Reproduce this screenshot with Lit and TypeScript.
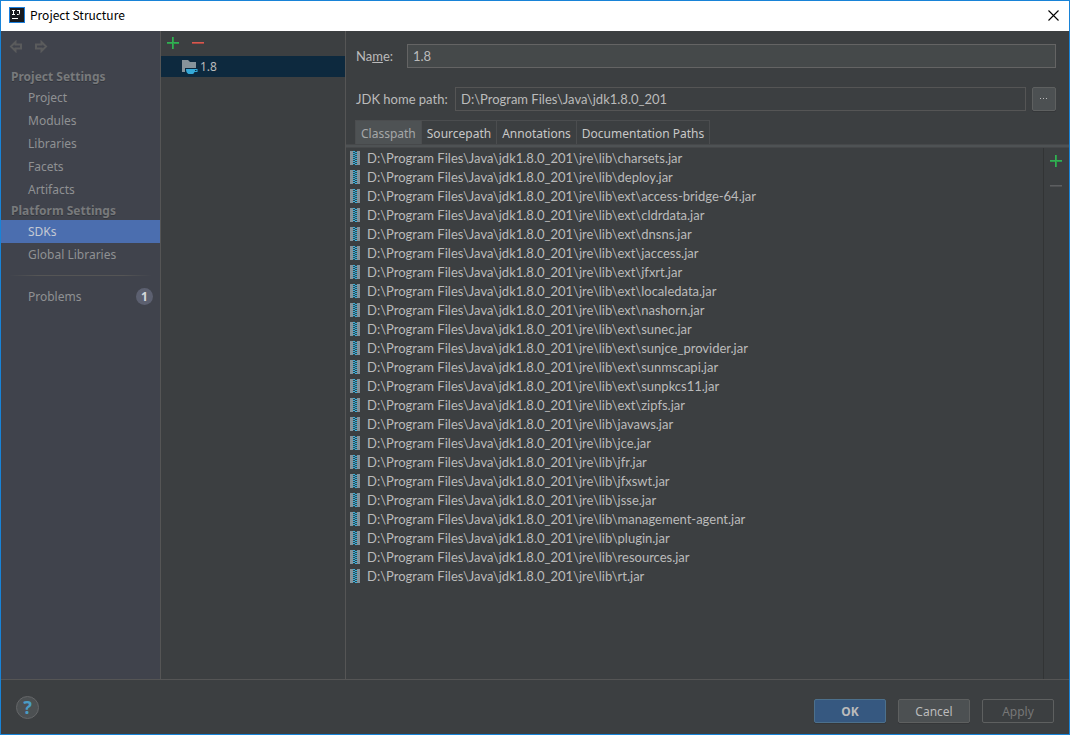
import { LitElement, html, css, svg } from "lit";
import { customElement, state } from "lit/decorators.js";

const LIB = "D:\\Program Files\\Java\\jdk1.8.0_201\\jre\\lib\\";
const JARS = [
  "charsets.jar",
  "deploy.jar",
  "ext\\access-bridge-64.jar",
  "ext\\cldrdata.jar",
  "ext\\dnsns.jar",
  "ext\\jaccess.jar",
  "ext\\jfxrt.jar",
  "ext\\localedata.jar",
  "ext\\nashorn.jar",
  "ext\\sunec.jar",
  "ext\\sunjce_provider.jar",
  "ext\\sunmscapi.jar",
  "ext\\sunpkcs11.jar",
  "ext\\zipfs.jar",
  "javaws.jar",
  "jce.jar",
  "jfr.jar",
  "jfxswt.jar",
  "jsse.jar",
  "management-agent.jar",
  "plugin.jar",
  "resources.jar",
  "rt.jar",
];
const TABS = ["Classpath", "Sourcepath", "Annotations", "Documentation Paths"];
const SECTIONS = [
  { title: "Project Settings", items: ["Project", "Modules", "Libraries", "Facets", "Artifacts"] },
  { title: "Platform Settings", items: ["SDKs", "Global Libraries"] },
];

const plusIcon = html`<svg width="12" height="12" viewBox="0 0 12 12" shape-rendering="crispEdges" aria-hidden="true">
  <path d="M5 0h2v12h-2zM0 5h12v2h-12z" fill="#299c46" />
  <path d="M5 0h1v12h-1zM0 5h12v1h-12z" fill="#35ad55" />
</svg>`;

const minusIcon = (top: string, bottom: string) => html`<svg width="12" height="12" viewBox="0 0 12 12" shape-rendering="crispEdges" aria-hidden="true">
  <path d="M0 5h12v1h-12z" fill=${top} />
  <path d="M0 6h12v1h-12z" fill=${bottom} />
</svg>`;

const arrowIcon = (d: string) => html`<svg width="13" height="13" viewBox="0 0 13 13" aria-hidden="true">
  <path d=${d} fill="none" stroke="#5a5b5c" stroke-width="2" />
</svg>`;

const jarIcon = html`<svg width="10" height="14" viewBox="0 0 10 14" shape-rendering="crispEdges" aria-hidden="true">
  <path d="M0 0h3v14h-3zM7 0h3v14h-3z" fill="#87939a" />
  <path d="M3 0h4v14h-4z" fill="#2b4450" />
  ${[0, 2, 4, 6, 8, 10, 12].map((y) => svg`<path d="M3 ${y}h2v1h-2zM5 ${y + 1}h2v1h-2z" fill="#3fb3dc" />`)}
</svg>`;

@customElement("app-root")
export class AppRoot extends LitElement {
  @state() private section = "SDKs";
  @state() private tab = "Classpath";

  static styles = css`
    :host {
      display: block;
      font: 12px/18px "Noto Sans", sans-serif;
      color: #bbbbbb;
    }
    * { box-sizing: border-box; }
    svg { display: block; flex: none; }
    button, input { font: inherit; color: inherit; margin: 0; }
    button { padding: 0; border: 0; background: none; }
    .window {
      display: flex;
      flex-direction: column;
      min-height: 100vh;
      border: 1px solid #1883d7;
      background: #3c3f41;
    }
    .titlebar {
      display: flex;
      align-items: center;
      gap: 5px;
      height: 30px;
      padding: 0 10px 2px 8px;
      background: #fff;
      color: #000;
      font-family: "Noto Sans CJK SC", sans-serif;
    }
    .title { flex: 1; margin: 0; font-size: inherit; font-weight: 400; }
    .main {
      flex: 1;
      display: grid;
      grid-template-columns: 160px 185px minmax(0, 1fr);
    }
    .sidebar { background: #40434c; border-right: 1px solid #555555; color: #8f9193; }
    .history { display: flex; align-items: flex-start; gap: 13px; height: 36px; padding: 9px 8px 0; }
    .heading {
      margin: 0;
      padding-left: 10px;
      font-size: 12px;
      line-height: 19px;
      font-weight: 700;
      color: #787a7c;
      text-shadow: 0 1px #33363c;
    }
    .nav { display: flex; align-items: center; height: 23px; padding: 0 7px 0 27px; color: inherit; text-decoration: none; }
    .nav.selected { background: #4b6eaf; color: #c3c9d3; }
    .divider { height: 1px; margin: 9px 8px; background: linear-gradient(90deg, transparent, #555555 20%, #555555 80%, transparent); }
    .badge {
      width: 17px;
      height: 17px;
      margin-left: auto;
      border-radius: 50%;
      background: #5c6070;
      color: #d5d8dc;
      font-weight: 700;
      line-height: 17px;
      text-align: center;
    }
    .sdks { border-right: 1px solid #555555; }
    .tools { display: flex; align-items: flex-start; gap: 13px; height: 25px; padding: 6px; }
    .sdk { display: flex; align-items: center; gap: 2px; width: 100%; height: 21px; padding-left: 21px; background: #0d293e; }
    .detail { display: flex; flex-direction: column; }
    .field, .jars { font-family: Lato, "Noto Sans", sans-serif; font-size: 13px; font-variant-ligatures: none; }
    .field { display: flex; align-items: center; padding: 0 13px 0 10px; margin-bottom: 19px; }
    .field:first-child { margin-top: 13px; }
    .field:nth-child(2) { margin-bottom: 9px; }
    .field input {
      flex: 1;
      min-width: 0;
      height: 24px;
      padding: 0 5px;
      border: 1px solid #646464;
      border-radius: 0;
      background: #45494a;
      outline: 0;
    }
    .field input[readonly] { background: #3c3f41; border-color: #555555; }
    .name { width: 51px; }
    .path { width: 99px; }
    .browse { width: 24px; height: 24px; margin-left: 6px; border: 1px solid #5e6060; border-radius: 2px; background: #4c5052; box-shadow: 0 1px #353739; }
    .browse svg { margin: auto; }
    .tabs { display: flex; padding-left: 9px; }
    .tab { height: 24px; padding: 2px 5px 0; border: 1px solid #4b4d4f; border-width: 1px 1px 0 0; color: #c8c8c8; }
    .tab:first-child { border-left-width: 1px; }
    .tab.selected { background: #4e5254; color: #a5a7a8; }
    .strip { height: 4px; border: 1px solid #46484a; border-width: 1px 0; background: #4e5254; }
    .classpath { flex: 1; display: flex; }
    .jars { flex: 1; margin: 0; padding: 0 0 0 4px; list-style: none; }
    .jars li { display: flex; align-items: center; gap: 7px; height: 19px; }
    .side { width: 26px; border-left: 1px solid #323435; padding: 7px 6px; display: flex; flex-direction: column; gap: 13px; }
    .footer { display: flex; align-items: center; gap: 12px; height: 55px; padding: 8px 15px 0; border-top: 1px solid #555555; }
    .help {
      width: 23px;
      height: 23px;
      margin: 0 auto 8px 0;
      border: 1px solid #646668;
      border-radius: 50%;
      background: #4c5052;
      color: #4a9cc4;
      font: 700 18px/20px "Noto Sans", sans-serif;
    }
    .action { width: 72px; height: 24px; padding-top: 2px; border: 1px solid #5e6060; border-radius: 2px; background: #4c5052; box-shadow: 0 1px #353739; }
    .primary { border-color: #4c708c; background: #365880; font-weight: 700; }
    .action:disabled { background: none; color: #777777; box-shadow: none; }
  `;

  private navItem(name: string) {
    return html`<a
      class="nav ${name === this.section ? "selected" : ""}"
      href="#"
      @click=${(e: Event) => {
        e.preventDefault();
        this.section = name;
      }}
      >${name}${name === "Problems" ? html`<span class="badge">1</span>` : ""}</a
    >`;
  }

  render() {
    return html`<div class="window">
      <header class="titlebar">
        <svg width="16" height="16" viewBox="0 0 16 16" aria-hidden="true">
          <path d="M0 0h16v16H0z" fill="#1c7fdc" />
          <path d="M1 1h14v14H1z" fill="#181a1f" />
          <path d="M3 3.500h3M3 7.500h3M4.500 3v5M8 3.500h3M10.500 3v3.500q0 1-1 1H8" fill="none" stroke="#fff" />
          <path d="M3 11h6v1H3z" fill="#fff" />
        </svg>
        <h1 class="title">Project Structure</h1>
        <button aria-label="Close">
          <svg width="11" height="11" viewBox="0 0 11 11"><path d="M.5.5l10 10M10.500.5l-10 10" stroke="#000" stroke-width="1.1" /></svg>
        </button>
      </header>

      <div class="main">
        <nav class="sidebar">
          <div class="history">
            <button disabled aria-label="Back">${arrowIcon("M2 6.500L6.500 2V4.500H12V8.500H6.500V11Z")}</button>
            <button disabled aria-label="Forward">${arrowIcon("M11 6.500L6.500 2V4.500H1V8.500H6.500V11Z")}</button>
          </div>
          ${SECTIONS.map((s) => html`<h2 class="heading">${s.title}</h2>${s.items.map((i) => this.navItem(i))}`)}
          <div class="divider"></div>
          ${this.navItem("Problems")}
        </nav>

        <section class="sdks">
          <div class="tools">
            <button aria-label="Add SDK">${plusIcon}</button>
            <button aria-label="Remove SDK">${minusIcon("#d8594f", "#a64842")}</button>
          </div>
          <button class="sdk">
            <svg width="16" height="14" viewBox="0 0 16 14" aria-hidden="true">
              <path d="M0 0h6l2 2h6v10H0z" fill="#87939a" />
              <path d="M3 8H16V12H12.500L11 14H6L3 12z" fill="#0d293e" />
              <path d="M4 9H15.500V12H12.500Q12 14 10.500 14H6.500Q4 13 4 9zM13 10v1h1.500v-1z" fill="#35a9d8" fill-rule="evenodd" />
            </svg>
            1.8
          </button>
        </section>

        <section class="detail">
          <div class="field">
            <label class="name" for="name">Na<u>m</u>e:</label>
            <input id="name" .value=${"1.8"} />
          </div>
          <div class="field">
            <label class="path" for="home">JDK home path:</label>
            <input id="home" readonly .value=${"D:\\Program Files\\Java\\jdk1.8.0_201"} />
            <button class="browse" aria-label="Browse">
              <svg width="8" height="2" viewBox="0 0 8 2"><path d="M0 0h1v1H0zM3 0h1v1H3zM6 0h1v1H6z" fill="#bbb" /></svg>
            </button>
          </div>
          <div class="tabs" role="tablist">
            ${TABS.map(
              (t) => html`<button
                role="tab"
                class="tab ${t === this.tab ? "selected" : ""}"
                aria-selected=${t === this.tab}
                @click=${() => (this.tab = t)}
              >${t}</button>`
            )}
          </div>
          <div class="strip"></div>
          <div class="classpath">
            <ul class="jars">
              ${JARS.map((j) => html`<li>${jarIcon}<span>${LIB + j}</span></li>`)}
            </ul>
            <div class="side">
              <button aria-label="Add path">${plusIcon}</button>
              <button disabled aria-label="Remove path">${minusIcon("#5c5e60", "#4e5052")}</button>
            </div>
          </div>
        </section>
      </div>

      <footer class="footer">
        <button class="help" aria-label="Help">?</button>
        <button class="action primary">OK</button>
        <button class="action">Cancel</button>
        <button class="action" disabled>Apply</button>
      </footer>
    </div>`;
  }
}
